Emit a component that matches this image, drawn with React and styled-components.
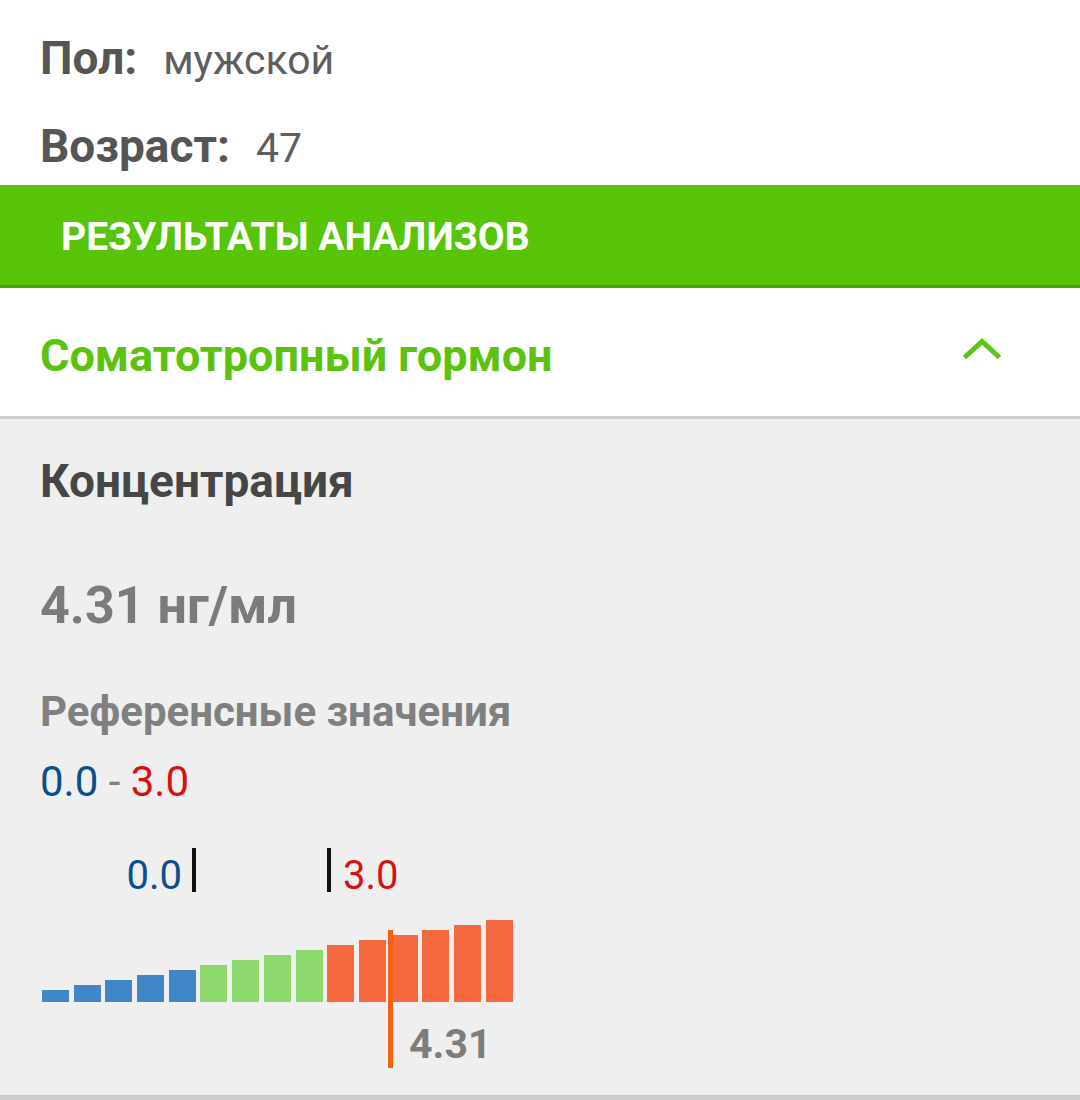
import React from "react";
import styled, { createGlobalStyle } from "styled-components";

const GlobalStyle = createGlobalStyle`
  html, body {
    margin: 0;
    padding: 0;
    background: #ffffff;
    font-family: Roboto, "Noto Sans", sans-serif;
  }
`;

// Patient info
const Page = styled.div`
  width: 1080px;
  height: 1100px;
  overflow: hidden;
  background: #ffffff;
`;

const Info = styled.div`
  display: flex;
  flex-direction: column;
  gap: 6px;
  padding: 18px 40px 0;
  height: 185px;
  box-sizing: border-box;
`;

const InfoRow = styled.div`
  display: flex;
  align-items: baseline;
  gap: 26px;
  line-height: 80px;
  font-size: 46px;
`;

const InfoLabel = styled.span`
  font-weight: 700;
  color: #555555;
`;

const InfoValue = styled.span`
  font-size: 41px;
  font-weight: 400;
  color: #5e5e5e;
`;

// Section band
const SectionBand = styled.div`
  background: #57c407;
  border-bottom: 3px solid #4a9f0b;
  padding: 4px 61px 0;
  line-height: 96px;
  font-size: 39px;
  font-weight: 700;
  color: #ffffff;
`;

// Accordion
const AccordionHeader = styled.div`
  display: flex;
  align-items: center;
  justify-content: space-between;
  height: 131px;
  padding: 8px 78px 0 40px;
  box-sizing: border-box;
  border-bottom: 3px solid #cfcfcf;
  background: #ffffff;
`;

const AccordionTitle = styled.span`
  font-size: 45px;
  line-height: 120px;
  font-weight: 700;
  color: #5bc20e;
`;

const Chevron = styled.svg`
  width: 40px;
  height: 22px;
  margin-top: -14px;
`;

const Panel = styled.div`
  background: #efefef;
  padding: 36px 40px 0;
  height: 681px;
  box-sizing: border-box;
  border-bottom: 5px solid #cccccc;
`;

const PanelTitle = styled.div`
  font-size: 46px;
  line-height: 52px;
  font-weight: 700;
  color: #464646;
`;

const Value = styled.div`
  margin-top: 69px;
  font-size: 52px;
  line-height: 60px;
  font-weight: 700;
  color: #7b7b7b;
`;

const RefTitle = styled.div`
  margin-top: 52px;
  font-size: 42px;
  line-height: 48px;
  font-weight: 700;
  color: #808080;
`;

const Range = styled.div`
  margin-top: 22px;
  font-size: 42px;
  line-height: 48px;
  color: #808080;
`;

const Low = styled.span`
  color: #0b4e8f;
`;

const High = styled.span`
  color: #d91010;
`;

// Scale chart
const Chart = styled.div`
  position: relative;
  margin: 34px 0 0 2px;
  padding-top: 80px;
  height: 175px;
`;

const Bars = styled.div`
  display: flex;
  align-items: flex-end;
  gap: 4.7px;
  height: 82px;
`;

const Bar = styled.div`
  width: 27px;
  background: ${(p) => p.$color};
`;

const Tick = styled.div`
  position: absolute;
  top: 8px;
  width: 4px;
  height: 44px;
  background: #111111;
`;

const TickLabel = styled.span`
  position: absolute;
  top: 14px;
  font-size: 40px;
  line-height: 44px;
  color: ${(p) => p.$color};
`;

const Marker = styled.div`
  position: absolute;
  top: 90px;
  width: 5px;
  height: 138px;
  background: #f5620f;
`;

const MarkerLabel = styled.span`
  position: absolute;
  top: 180px;
  font-size: 41px;
  line-height: 48px;
  font-weight: 700;
  color: #7d7d7d;
`;

const BLUE = "#4186c6";
const GREEN = "#8ed870";
const ORANGE = "#f6693e";

const bars = Array.from({ length: 15 }, (_, i) => ({
  height: 12 + i * 5,
  color: i < 5 ? BLUE : i < 9 ? GREEN : ORANGE,
}));

const App = () => (
  <Page>
    <GlobalStyle />
    <Info>
      <InfoRow>
        <InfoLabel>Пол:</InfoLabel>
        <InfoValue>мужской</InfoValue>
      </InfoRow>
      <InfoRow>
        <InfoLabel>Возраст:</InfoLabel>
        <InfoValue>47</InfoValue>
      </InfoRow>
    </Info>

    <SectionBand>РЕЗУЛЬТАТЫ АНАЛИЗОВ</SectionBand>

    <AccordionHeader>
      <AccordionTitle>Соматотропный гормон</AccordionTitle>
      <Chevron viewBox="0 0 40 22" fill="none">
        <path d="M2.5 19.5 L20 3.5 L37.5 19.5" stroke="#5cc514" strokeWidth="5" />
      </Chevron>
    </AccordionHeader>

    <Panel>
      <PanelTitle>Концентрация</PanelTitle>
      <Value>4.31 нг/мл</Value>
      <RefTitle>Референсные значения</RefTitle>
      <Range>
        <Low>0.0</Low> - <High>3.0</High>
      </Range>

      <Chart>
        <TickLabel $color="#0b4e8f" style={{ right: "calc(100% - 140px)" }}>
          0.0
        </TickLabel>
        <Tick style={{ left: 150 }} />
        <Tick style={{ left: 285 }} />
        <TickLabel $color="#d91010" style={{ left: 301 }}>
          3.0
        </TickLabel>

        <Bars>
          {bars.map((b, i) => (
            <Bar key={i} $color={b.color} style={{ height: b.height }} />
          ))}
        </Bars>

        <Marker style={{ left: 346 }} />
        <MarkerLabel style={{ left: 367 }}>4.31</MarkerLabel>
      </Chart>
    </Panel>
  </Page>
);

export default App;
